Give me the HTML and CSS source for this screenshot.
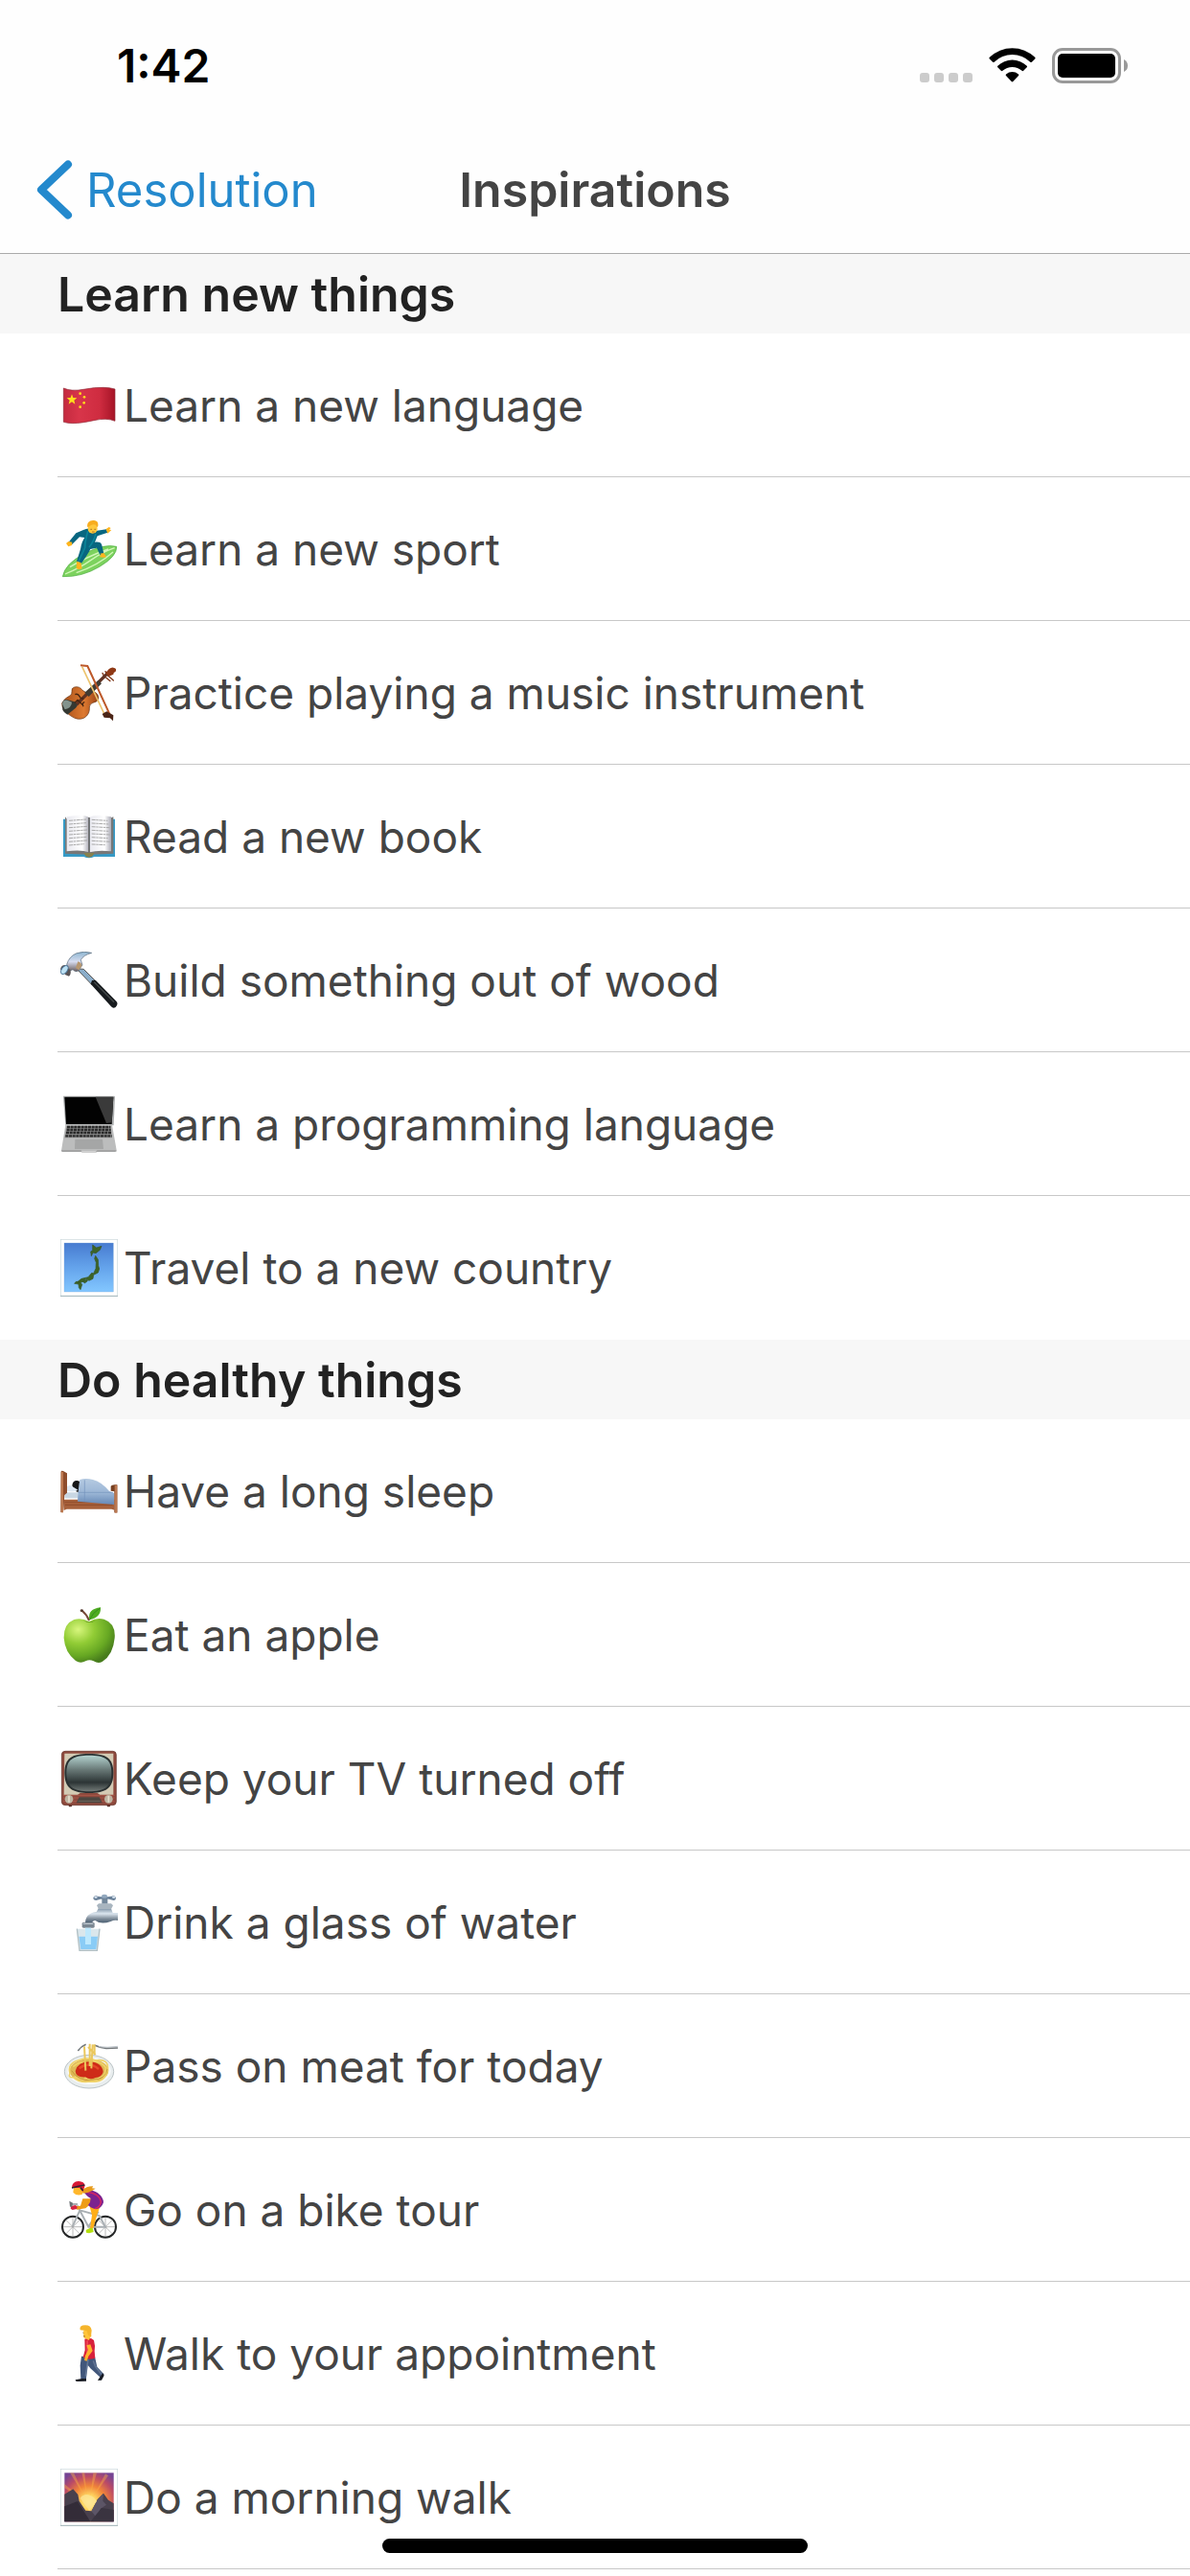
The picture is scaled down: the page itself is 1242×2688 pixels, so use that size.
FILE: index.html
```html
<!DOCTYPE html>
<html lang="en">
<head>
    <meta charset="UTF-8">
    <meta name="viewport" content="width=device-width, initial-scale=1.0">
    <title>Inspirations</title>
    <link rel="stylesheet" href="styles.css">
</head>
<body>
    <header class="header">
        <div class="status-bar">
            <span class="time">1:42</span>
            <div class="status-icons">
                <svg class="signal" viewBox="0 0 55 10" aria-hidden="true">
                    <g fill="#ccc"><rect width="10" height="10" rx="3"/><rect x="15" width="10" height="10" rx="3"/><rect x="30" width="10" height="10" rx="3"/><rect x="45" width="10" height="10" rx="3"/></g>
                </svg>
                <svg class="wifi" viewBox="0 0 49 36" aria-hidden="true">
                    <path d="M.8 9.8a34 34 0 0 1 47.4 0q.8.8 0 1.6l-3.3 3.3q-.8.8-1.6 0a27 27 0 0 0-37.6 0q-.8.8-1.6 0L.8 11.4q-.8-.8 0-1.6z"/>
                    <path d="M9.3 18.7a22 22 0 0 1 30.4 0q.8.8 0 1.6l-3.5 3.5q-.8.8-1.6 0a15 15 0 0 0-20.2 0q-.8.8-1.6 0l-3.5-3.5q-.8-.8 0-1.6z"/>
                    <path d="M18 27.500a10 10 0 0 1 13 0q.8.8 0 1.6l-5.7 6q-.8.8-1.6 0l-5.7-6q-.8-.8 0-1.6z"/>
                </svg>
                <svg class="battery" viewBox="0 0 80 37" aria-hidden="true">
                    <rect x="1.5" y="1.5" width="69" height="34" rx="9.5" fill="none" stroke="#999" stroke-width="3"/>
                    <rect x="6" y="6" width="60" height="25" rx="5"/>
                    <path d="M75 12q4 2 4 6.5T75 25z" fill="#999"/>
                </svg>
            </div>
        </div>
        <nav class="nav-bar">
            <a class="back" href="#">
                <svg class="chevron" viewBox="0 0 38 62" aria-hidden="true">
                    <path d="M33 4.5L5 31l28 26.5" fill="none" stroke="currentColor" stroke-width="8" stroke-linecap="round" stroke-linejoin="round"/>
                </svg>
                Resolution
            </a>
            <h1 class="title">Inspirations</h1>
        </nav>
    </header>

    <main>
        <section class="section">
            <h2 class="section-title">Learn new things</h2>
            <ul class="list">
                <li class="row">
                    <svg class="icon" viewBox="0 0 180 180" aria-hidden="true">
                        <defs>
                            <linearGradient id="flag-red"><stop offset="0" stop-color="#c42a3f"/><stop offset=".3" stop-color="#d8354a"/><stop offset=".7" stop-color="#cf2c40"/><stop offset="1" stop-color="#a51427"/></linearGradient>
                        </defs>
                        <path d="M10 36Q35 47 72 40T135 34Q155 34 171 39V139Q145 128 105 137T38 146Q22 146 10 142z" fill="url(#flag-red)" stroke="#8f2936" stroke-width="2"/>
                        <path d="M36 55l4 11 12 1-9 7 3 12-10-7-10 7 3-12-9-7 12-1z" fill="#ffe01b"/>
                        <g fill="#ffe01b"><circle cx="62" cy="53" r="4"/><circle cx="75" cy="64" r="4"/><circle cx="74" cy="82" r="4"/><circle cx="62" cy="95" r="4"/></g>
                    </svg>
                    <span>Learn a new language</span>
                </li>
                <li class="row">
                    <svg class="icon" viewBox="0 0 180 180" aria-hidden="true">
                        <path d="M7 176Q14 136 75 104T176 82Q178 112 123 145T7 176z" fill="#7cd25e" stroke="#48aa3d" stroke-width="2"/>
                        <path d="M15 168Q60 150 95 125T170 86M30 146Q80 115 150 90M50 164Q120 140 165 99" fill="none" stroke="#d2f7b9" stroke-width="4"/>
                        <path d="M72 30Q90 20 115 32L144 28 148 38 116 49 108 68Q128 66 130 78L136 104 124 108 114 86 94 90Q87 105 66 134L51 128 63 90Q66 68 76 54L60 52 36 76 26 68 49 40z" fill="#086680"/>
                        <path d="M86 34Q77 66 77 86L57 129M111 42Q105 66 90 84" fill="none" stroke="#0b8498" stroke-width="5"/>
                        <path d="M37 68L25 66 18 72 25 82 36 78zM143 27l9-6 6 3-5 5 7 1-12 11zM124 104l12-2 8 12q-6 5-22 0l6-6zM51 128l13 4 4 19q-9 5-18 0z" fill="#ffb51d"/>
                        <circle cx="101" cy="26" r="15" fill="#ffc83c"/>
                        <path d="M84 18Q84 1 102 0T118 17L115 22Q110 9 96 15L86 22z" fill="#f8ad20"/>
                        <path d="M94 28h5M106 28h5M99 36h8" stroke="#825021" stroke-width="2"/>
                    </svg>
                    <span>Learn a new sport</span>
                </li>
                <li class="row">
                    <svg class="icon" viewBox="0 0 180 180" aria-hidden="true">
                        <defs>
                            <linearGradient id="violin-wood"><stop offset="0" stop-color="#a54d18"/><stop offset=".6" stop-color="#dd7a31"/><stop offset="1" stop-color="#9b4215"/></linearGradient>
                        </defs>
                        <path d="M132 28l7 14M141 23l7 13M150 37l16 14M143 42l13 11" stroke="#7c3516" stroke-width="4" stroke-linecap="round"/>
                        <path d="M5 122Q14 105 31 98Q37 94 36 85Q34 75 44 72Q60 68 69 82L84 91Q96 85 105 86Q121 93 119 108Q116 119 102 121Q91 124 91 135Q93 157 75 168Q56 178 34 163Q3 143 5 122z" fill="url(#violin-wood)" stroke="#65300f" stroke-width="2"/>
                        <path d="M6 124Q8 108 23 112L52 120Q58 127 48 137L22 158Q9 151 7 142z" fill="#343832"/>
                        <path d="M6 125Q8 110 22 113L36 119Q36 136 14 142z" fill="#83938d"/>
                        <path d="M51 126L151 25" stroke="#603222" stroke-width="10"/>
                        <path d="M76 89L119 50 129 61 89 102z" fill="#403c34"/>
                        <path d="M142 30Q153 9 166 11Q178 13 173 23Q165 26 166 32L152 38z" fill="#8f3915"/>
                        <path d="M46 95q9-4 14 6t12 5M72 133q-5-13 4-14M45 121l9-9 17 17" fill="none" stroke="#442411" stroke-width="4"/>
                        <path d="M68 8L139 159" stroke="#ecc36d" stroke-width="5"/>
                        <path d="M63 4l22 2 75 163" fill="none" stroke="#bd5829" stroke-width="6"/>
                        <path d="M131 156l14-8 21 12-1 18-9-9-19-2z" fill="#4b2517"/>
                    </svg>
                    <span>Practice playing a music instrument</span>
                </li>
                <li class="row">
                    <svg class="icon" viewBox="0 0 180 180" aria-hidden="true">
                        <defs>
                            <linearGradient id="page"><stop offset="0" stop-color="#e9e9f0"/><stop offset=".7" stop-color="#fff"/><stop offset="1" stop-color="#adadb8"/></linearGradient>
                        </defs>
                        <path d="M9 35h162v118h-65q-16 8-33 0H9z" fill="#369ac6"/>
                        <path d="M15 28v115l70 3h12l69-3V28l-12 5-60 100z" fill="#777"/>
                        <path d="M20 28Q70 18 90 30V139Q65 130 20 136z" fill="url(#page)"/>
                        <path d="M91 30Q110 18 159 28V136Q119 131 91 139z" fill="url(#page)"/>
                        <path d="M90 30v110" stroke="#666" stroke-width="5"/>
                        <path d="M27 40l54-4M27 51l54-4M27 62l57-4M27 73l57-4M27 84l57-4M27 95l55-4M27 106l57-4M27 117l48-4M98 37l50 3M98 48l53 3M98 59l56 3M98 70l53 3M98 81l57 3M98 92l51 3M98 103l57 3M98 114l42 2" stroke="#aaa" stroke-width="3" stroke-dasharray="12 2 7 2"/>
                        <path d="M74 141h32q-4 14-16 14t-16-14" fill="#86804d"/>
                    </svg>
                    <span>Read a new book</span>
                </li>
                <li class="row">
                    <svg class="icon" viewBox="0 0 180 180" aria-hidden="true">
                        <defs>
                            <linearGradient id="steel" x1="0" y1="0" x2="0" y2="1"><stop offset="0" stop-color="#8eb6d1"/><stop offset=".5" stop-color="#d6dcef"/><stop offset="1" stop-color="#6a5d5d"/></linearGradient>
                        </defs>
                        <path d="M62 54l11 1 36 36-11 12-42-44z" fill="#8badc9" stroke="#555" stroke-width="3"/>
                        <path d="M99 90l11-1 65 66q8 8-2 19-8 5-14-2L95 101z" fill="#171b1e"/>
                        <path d="M106 95l62 63" stroke="#44494a" stroke-width="4"/>
                        <path d="M20 40Q28 14 51 5Q75-3 98 4Q72 11 64 26L69 42 55 61Q46 65 39 56l-9 4z" fill="url(#steel)" stroke="#526475" stroke-width="2"/>
                        <path d="M55 31q12 4 12 14l-9 13-10-7z" fill="#b7976f"/>
                        <path d="M0 55Q3 42 14 42L31 57Q35 70 27 77L16 73z" fill="#5a5456"/>
                        <ellipse cx="13" cy="57" rx="9" ry="15" transform="rotate(35 13 57)" fill="#bde1f4" stroke="#497397" stroke-width="3"/>
                    </svg>
                    <span>Build something out of wood</span>
                </li>
                <li class="row">
                    <svg class="icon" viewBox="0 0 180 180" aria-hidden="true">
                        <path d="M9 2h160q2 0 2 4l-4 88H16L9 6z" fill="#aeb0b1"/>
                        <path d="M13 5h153l-5 85H18z" fill="#020202"/>
                        <path d="M110 5h56l-5 80-17 2z" fill="#3a3a3a"/>
                        <path d="M16 92h146l14 80-4 5h-58l-4-3H68l-4 3H7l-4-4z" fill="#bcbdbd"/>
                        <path d="M19 96h139l4 37H13z" fill="#909191"/>
                        <path d="M21 99h136M20 108h138M18 117h141M16 127h145" stroke="#2b2b2b" stroke-width="7" stroke-dasharray="9 2"/>
                        <path d="M46 137h86l3 31H45z" fill="#a5a6a6"/>
                        <path d="M3 174h61l4 3h44l4-3h60" fill="none" stroke="#737373" stroke-width="2"/>
                    </svg>
                    <span>Learn a programming language</span>
                </li>
                <li class="row">
                    <svg class="icon" viewBox="0 0 180 180" aria-hidden="true">
                        <defs>
                            <linearGradient id="sea" x1="0" y1="0" x2="0" y2="1"><stop offset="0" stop-color="#477bd0"/><stop offset=".5" stop-color="#64a3eb"/><stop offset="1" stop-color="#83c7ff"/></linearGradient>
                        </defs>
                        <rect x="1" y="1" width="178" height="177" fill="#fff" stroke="#cbd8dc" stroke-width="2"/>
                        <path d="M0 178h180" stroke="#a3b5ba" stroke-width="3"/>
                        <rect x="12" y="12" width="154" height="153" fill="url(#sea)" stroke="#84abd8"/>
                        <path d="M101 18l12 9 16-5-5 12-13 10-9-2-5 11-2-14 6-4zM110 52l8 12 1 19 3 10-4 12-14 7-2 12-12 6-10-6-8 9-13 4-6-3 13-10 21-5 11-13 6 1 7-15 1-19-5-12zM49 133l12 1 7 8-5 16-5-6-1-11-13-2zM70 132l13-6 2 5-9 7z" fill="#3c6427" stroke="#385524" stroke-width="2"/>
                    </svg>
                    <span>Travel to a new country</span>
                </li>
            </ul>
        </section>

        <section class="section">
            <h2 class="section-title">Do healthy things</h2>
            <ul class="list">
                <li class="row">
                    <svg class="icon" viewBox="0 0 180 180" aria-hidden="true">
                        <defs>
                            <linearGradient id="blanket" x1="0" y1="0" x2="0" y2="1"><stop offset="0" stop-color="#b5cae1"/><stop offset=".55" stop-color="#9bb6d6"/><stop offset="1" stop-color="#6688b5"/></linearGradient>
                        </defs>
                        <path d="M9 116h160v33l-9-3H20l-9 4z" fill="#a7603a"/>
                        <path d="M14 124h150M15 133h148" stroke="#834323" stroke-width="2"/>
                        <path d="M14 94h55v18H14z" fill="#c9d7e3"/>
                        <path d="M37 72q2-16 15-15 9 0 11 8l-7 29-14-7z" fill="#171718"/>
                        <path d="M14 86q3-12 17-15l24 15q-7 7-27 5z" fill="#dfe9f3"/>
                        <path d="M54 122Q56 81 61 54Q79 48 102 54Q128 60 153 90L168 96V132z" fill="url(#blanket)"/>
                        <path d="M56 94h109M76 55v66" stroke="#7294bd" stroke-width="2"/>
                        <path d="M2 29q0-4 7-2l12 7v61l-8 7-4 54H1z" fill="#8e4d2c"/>
                        <path d="M2 30h7v127H2z" fill="#bd7950"/>
                        <path d="M158 89V74q3-6 20-4v87h-9V91z" fill="#774022"/>
                        <path d="M170 71h8v87h-8z" fill="#bb7750"/>
                    </svg>
                    <span>Have a long sleep</span>
                </li>
                <li class="row">
                    <svg class="icon" viewBox="0 0 180 180" aria-hidden="true">
                        <defs>
                            <radialGradient id="apple-skin" cx=".28" cy=".25" r=".8"><stop offset="0" stop-color="#d8f67d"/><stop offset=".4" stop-color="#91cc35"/><stop offset=".75" stop-color="#67a823"/><stop offset="1" stop-color="#477c1c"/></radialGradient>
                        </defs>
                        <path d="M90 48Q114 34 137 41Q174 54 170 100Q165 153 132 173Q119 181 104 172Q91 166 79 172Q63 181 48 171Q14 145 11 100Q10 55 43 42Q66 35 90 48z" fill="url(#apple-skin)"/>
                        <path d="M72 44q20 9 39 0-20 13-39 0" fill="#53851c"/>
                        <path d="M90 45Q83 26 68 14" fill="none" stroke="#774838" stroke-width="6"/>
                        <ellipse cx="67" cy="14" rx="5" ry="4" fill="#54382d"/>
                        <path d="M91 43Q84 9 126 4Q128 36 91 43z" fill="#4eac21"/>
                        <path d="M92 42Q99 22 124 6" fill="none" stroke="#287b1c" stroke-width="2"/>
                    </svg>
                    <span>Eat an apple</span>
                </li>
                <li class="row">
                    <svg class="icon" viewBox="0 0 180 180" aria-hidden="true">
                        <defs>
                            <linearGradient id="tv-glass" x1="0" y1="0" x2="0" y2="1"><stop offset="0" stop-color="#b4d3d0"/><stop offset=".4" stop-color="#687876"/><stop offset=".75" stop-color="#2c3435"/><stop offset="1" stop-color="#737b78"/></linearGradient>
                        </defs>
                        <path d="M24 168h15l-4 10h-8zM144 168h15l-4 10h-8z" fill="#572e28"/>
                        <rect x="4" y="4" width="171" height="169" rx="11" fill="#8d493d" stroke="#64332b" stroke-width="2"/>
                        <path d="M9 142h161M9 150h161M9 161h161" stroke="#a65749" stroke-width="3"/>
                        <path d="M13 11h153v129H124l-8-5H62l-8 5H11z" fill="#d3cab4"/>
                        <path d="M90 12C142 12 166 24 166 72S142 135 90 135 13 120 13 72 38 12 90 12z" fill="#293031"/>
                        <path d="M90 17C138 17 160 28 160 72S138 130 90 130 19 116 19 72 42 17 90 17z" fill="url(#tv-glass)"/>
                        <path d="M50 166l9-18h63l9 18z" fill="#4c4640"/>
                        <path d="M56 160h69" stroke="#706559" stroke-width="3"/>
                        <circle cx="27" cy="154" r="13" fill="#bdb4a2"/><circle cx="151" cy="154" r="13" fill="#bdb4a2"/>
                        <path d="M27 144v20M151 144v20" stroke="#e4ddcb" stroke-width="5"/>
                    </svg>
                    <span>Keep your TV turned off</span>
                </li>
                <li class="row">
                    <svg class="icon" viewBox="0 0 180 180" aria-hidden="true">
                        <defs>
                            <linearGradient id="tap" x1="0" y1="0" x2="0" y2="1"><stop offset="0" stop-color="#62798f"/><stop offset=".4" stop-color="#dce6ef"/><stop offset=".7" stop-color="#7d8b98"/><stop offset="1" stop-color="#3d5368"/></linearGradient>
                        </defs>
                        <path d="M78 95Q77 61 113 57L122 41h35l7 19h16v24q-12-2-22 3-31 11-49-3-9 0-10 11z" fill="url(#tap)"/>
                        <path d="M120 31h39l6 6-6 11h-39l-6-11z" fill="#a9b5bf"/>
                        <path d="M130 14h18v17h-18z" fill="#74889b"/>
                        <path d="M113 7q5 3 25 4 20-1 27-4 8 0 9 7-1 8-8 7-18-6-28-5-12 0-26 5-9 0-9-8 2-7 10-6z" fill="#6a8199"/>
                        <ellipse cx="111" cy="11" rx="5" ry="3" fill="#dce8f4"/><ellipse cx="167" cy="11" rx="5" ry="3" fill="#dce8f4"/><ellipse cx="138" cy="8" rx="9" ry="6" fill="#91a7bd"/>
                        <rect x="68" y="90" width="39" height="17" rx="4" fill="#7b8792"/>
                        <path d="M71 94h32" stroke="#ccd7df" stroke-width="3"/>
                        <path d="M51 110h73l-8 69H60z" fill="#dbe7ec"/>
                        <path d="M58 134h59l-5 40H64z" fill="#8accf6"/>
                        <path d="M78 107h18v52H78z" fill="#bde8fd"/>
                        <path d="M52 110l8 68h55l8-68" fill="none" stroke="#b1c0c5" stroke-width="4"/>
                    </svg>
                    <span>Drink a glass of water</span>
                </li>
                <li class="row">
                    <svg class="icon" viewBox="0 0 180 180" aria-hidden="true">
                        <ellipse cx="90" cy="107" rx="77" ry="52" fill="#e8edee" stroke="#bcc4c6" stroke-width="3"/>
                        <ellipse cx="90" cy="105" rx="68" ry="42" fill="#f9fafa"/>
                        <ellipse cx="90" cy="104" rx="61" ry="37" fill="#dfb855"/>
                        <path d="M30 112q-8-30 25-40 30-12 53 0 46-8 40 32-10 40-52 34-38 6-55-13-17 2-11-13zM44 122q25 16 36 5 24 17 44-2 20-2 17-29M40 92q28-25 42-5M101 73q35 6 42 24" fill="none" stroke="#f0d36a" stroke-width="5"/>
                        <path d="M35 104q22 34 65 29 45-3 47-34" fill="none" stroke="#b78a2b" stroke-width="2"/>
                        <path d="M47 105Q55 76 92 76Q131 79 134 108Q130 125 110 126Q93 135 78 124Q48 126 47 105z" fill="#ce2b18"/>
                        <path d="M59 97q30-24 61 2" fill="none" stroke="#e54a28" stroke-width="7"/>
                        <path d="M55 42q10-14 25-20M108 25q16 8 36 9l36-1" fill="none" stroke="#74797c" stroke-width="5"/>
                        <path d="M120 29q25 4 60-1" fill="none" stroke="#c0c7cd" stroke-width="3"/>
                        <path d="M79 104L75 28M92 90V20M97 97L101 22M107 55V22M87 30l23 24" fill="none" stroke="#eac75c" stroke-width="6"/>
                    </svg>
                    <span>Pass on meat for today</span>
                </li>
                <li class="row">
                    <svg class="icon" viewBox="0 0 180 180" aria-hidden="true">
                        <g stroke="#999" stroke-width="2"><path d="M6 143h66M39 110v66M16 120l46 46M16 166l46-46M110 143h66M141 110v66M118 120l46 46M118 166l46-46"/></g>
                        <circle cx="39" cy="143" r="33" fill="none" stroke="#252728" stroke-width="6"/><circle cx="141" cy="143" r="33" fill="none" stroke="#252728" stroke-width="6"/>
                        <path d="M38 142l23-51 61 17 19 35H88L60 90 53 76M88 143l31-48M35 72h19" fill="none" stroke="#a9afb3" stroke-width="6"/>
                        <path d="M92 80l7 26-6 42h10l13-46 8-22z" fill="#ffae19"/>
                        <path d="M70 55l-7 22-14 2 2 10 28-4 15-13 3-17z" fill="#ee9d18"/>
                        <path d="M70 28q28-4 47 9 18 14 18 30-6 18-23 21-19-5-25-13 8-8 8-21-13-6-25-26z" fill="#7b238f"/>
                        <path d="M81 34q41 3 46 31-2 16-19 21" fill="none" stroke="#d92560" stroke-width="4"/>
                        <path d="M66 29q20-15 37-13l-4 6 11 1q-20 15-39 15z" fill="#e79b1d"/>
                        <path d="M42 20h31l-5 22q-19 5-28-7z" fill="#ffb72c"/>
                        <path d="M36 21Q36 1 57 0q18 1 20 14l-7 19-8-12z" fill="#d81735"/>
                        <path d="M36 21q23-6 40-9M63 20l8 10" fill="none" stroke="#302333" stroke-width="5"/>
                        <path d="M33 78l14-3q9 4 4 12l-13 3-6-4z" fill="#d52242"/>
                        <path d="M28 62l2 18h7l2-12z" fill="#6b7075"/>
                        <path d="M80 153l12-6h9l3 12-14 4-9-2z" fill="#b4df0d"/>
                    </svg>
                    <span>Go on a bike tour</span>
                </li>
                <li class="row">
                    <svg class="icon" viewBox="0 0 180 180" aria-hidden="true">
                        <path d="M66 98l42 2 7 31 22 24-12 9-31-28-10-12-3 44-17 1-2-42z" fill="#42577b"/>
                        <path d="M87 108l-8 53M103 112l7 18 19 25" fill="none" stroke="#627594" stroke-width="5"/>
                        <path d="M67 168h14v8l-28 1q-7 0-6-5zM124 163l9-12 4 7-8 15-12 1z" fill="#171a22"/>
                        <path d="M76 44q18-7 29 4 5 17 2 34l2 22q-23 7-38-3l6-22z" fill="#d8213c"/>
                        <path d="M84 49v48" stroke="#ed4052" stroke-width="6"/>
                        <path d="M94 61l7 20-13 17-5 15-8-2 3-15 9-18-5-14z" fill="#ffb12c"/>
                        <path d="M72 19l24-3 1 18-8 14-16-8z" fill="#ffc43b"/>
                        <path d="M62 16Q58 1 78 1q18 0 20 16l-3 20-8-5-4-13z" fill="#f5b52c"/>
                        <path d="M70 24l3 2M72 35l6 1" stroke="#6c421c" stroke-width="2"/>
                    </svg>
                    <span>Walk to your appointment</span>
                </li>
                <li class="row">
                    <svg class="icon" viewBox="0 0 180 180" aria-hidden="true">
                        <defs>
                            <radialGradient id="sun" cx=".5" cy=".6" r=".7"><stop offset="0" stop-color="#fff4ad"/><stop offset=".2" stop-color="#ffd762"/><stop offset=".48" stop-color="#f18439"/><stop offset=".75" stop-color="#bc4b65"/><stop offset="1" stop-color="#754494"/></radialGradient>
                        </defs>
                        <rect x="1" y="1" width="178" height="177" fill="#fff" stroke="#cbd8dc" stroke-width="2"/>
                        <path d="M0 178h180" stroke="#a3b5ba" stroke-width="3"/>
                        <rect x="13" y="13" width="154" height="153" fill="url(#sun)"/>
                        <path d="M76 88L30 13h12zM83 85L67 13h9zM94 85l9-72h11zM103 88l38-72 9 6zM71 97L13 48v12z" fill="#ffb544" opacity=".4"/>
                        <path d="M13 80l27-16 15 17 4 20 20 30 19 2 18-36 19-20 15 21 17 11v57H13z" fill="#48404d"/>
                        <path d="M116 97l19-20-2 24 11 12-18 12-13 28-16-20z" fill="#5c5566"/>
                        <path d="M62 92q17-22 45 0l7 10-23 30z" fill="#fde492" opacity=".8"/>
                        <path d="M13 118l41-16 40 64H13z" fill="#332c38"/>
                        <path d="M94 166l35-43 38 6v37z" fill="#3a3440"/>
                    </svg>
                    <span>Do a morning walk</span>
                </li>
            </ul>
        </section>
    </main>

    <div class="home-indicator"></div>
</body>
</html>
```

FILE: styles.css
```css
* {
    box-sizing: border-box;
}

body {
    margin: 0;
    min-height: 100vh;
    background-color: #fff;
    color: #444;
    font-family: Inter, "Liberation Sans", sans-serif;
    font-size: 46px;
}

.header {
    background-color: #fefefe;
    border-bottom: 1px solid #aaa;
}

.status-bar {
    display: flex;
    justify-content: space-between;
    align-items: center;
    height: 132px;
    padding: 4px 64px 0 122px;
    color: #000;
}

.time {
    font-size: 48px;
    font-weight: 600;
}

.status-icons {
    display: flex;
    align-items: flex-end;
    gap: 17px;
}

.signal {
    width: 55px;
    height: 10px;
    margin-bottom: 1px;
}

.wifi {
    width: 49px;
    height: 36px;
    margin-bottom: 1px;
}

.battery {
    width: 80px;
    height: 37px;
}

.nav-bar {
    display: grid;
    grid-template-columns: 1fr auto 1fr;
    align-items: center;
    height: 132px;
    padding: 0 38px;
}

.back {
    display: flex;
    align-items: center;
    gap: 14px;
    color: #2489cd;
    font-size: 49px;
    text-decoration: none;
}

.chevron {
    width: 38px;
    height: 62px;
}

.title {
    margin: 0;
    font-size: 50px;
    font-weight: 600;
}

.section-title {
    display: flex;
    align-items: center;
    height: 83px;
    margin: 0;
    padding: 0 60px;
    background-color: #f7f7f7;
    color: #222;
    font-size: 50px;
    font-weight: 600;
}

.list {
    margin: 0;
    padding: 0 0 0 60px;
    list-style: none;
}

.row {
    display: flex;
    align-items: center;
    gap: 6px;
    height: 150px;
    padding-left: 3px;
    border-bottom: 1px solid #c8c8c8;
}

.section:first-child .row:last-child {
    border-bottom: none;
}

.icon {
    flex: none;
    width: 60px;
    height: 60px;
}

.home-indicator {
    position: fixed;
    bottom: 24px;
    left: 50%;
    width: 444px;
    height: 15px;
    margin-left: -222px;
    border-radius: 8px;
    background-color: #000;
}
```
